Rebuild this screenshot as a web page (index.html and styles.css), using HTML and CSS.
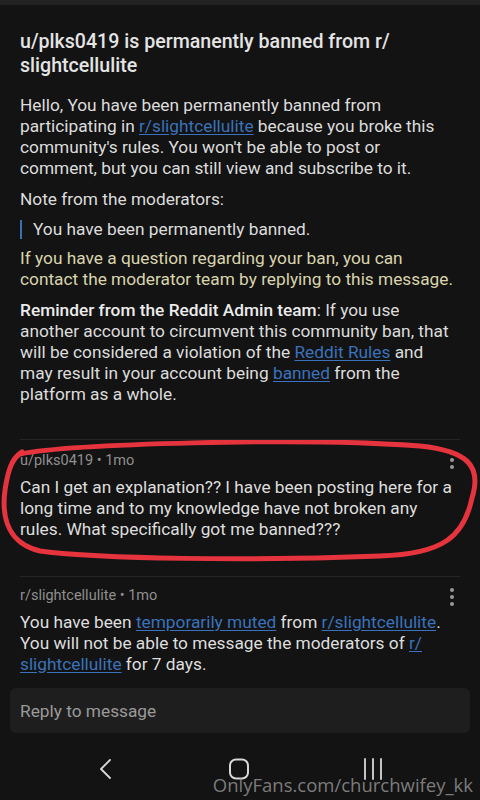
FILE: index.html
```html
<!DOCTYPE html>
<html>
<head>
<meta charset="utf-8">
<link rel="stylesheet" href="styles.css">
</head>
<body>
<div class="screen">
  <div class="topband"></div>
  <main class="content">
    <h1 class="title">u/plks0419 is permanently banned from r/ slightcellulite</h1>
    <p class="para">Hello, You have been permanently banned from participating in <a class="link">r/slightcellulite</a> because you broke this community's rules. You won't be able to post or comment, but you can still view and subscribe to it.</p>
    <p class="para">Note from the moderators:</p>
    <blockquote class="quote">You have been permanently banned.</blockquote>
    <p class="para note">If you have a question regarding your ban, you can contact the moderator team by replying to this message.</p>
    <p class="para"><strong class="strong">Reminder from the Reddit Admin team</strong>: If you use another account to circumvent this community ban, that will be considered a violation of the <a class="link">Reddit Rules</a> and may result in your account being <a class="link">banned</a> from the platform as a whole.</p>

    <section class="message circled">
      <div class="meta">u/plks0419 • 1mo</div>
      <p class="body">Can I get an explanation?? I have been posting here for a long time and to my knowledge have not broken any rules. What specifically got me banned???</p>
      <span class="dots"><i></i><i></i><i></i></span>
      <svg class="scribble" viewBox="0 0 480 130" width="480" height="130">
        <path d="M 20 14 C 70 4, 300 -3, 420 6 C 468 11, 482 26, 472 58 C 464 96, 444 114, 380 116 C 250 121, 100 119, 40 111 C 10 104, 1 80, 5 50 C 8 30, 12 18, 22 12" fill="none" stroke="#e5343d" stroke-width="5" stroke-linecap="round"/>
      </svg>
    </section>

    <section class="message second">
      <div class="meta">r/slightcellulite • 1mo</div>
      <p class="body">You have been <a class="link">temporarily muted</a> from <a class="link">r/slightcellulite</a>. You will not be able to message the moderators of <a class="link">r/ slightcellulite</a> for 7 days.</p>
      <span class="dots"><i></i><i></i><i></i></span>
    </section>
  </main>

  <div class="reply">Reply to message</div>

  <nav class="navbar">
    <svg class="nav-icon" width="20" height="24" viewBox="0 0 20 24"><path d="M 13 3 L 4 12 L 13 21" fill="none" stroke="#d8d8d8" stroke-width="1.8" stroke-linecap="round" stroke-linejoin="round"/></svg>
    <svg class="nav-icon" width="24" height="24" viewBox="0 0 24 24"><rect x="3" y="2.5" width="18" height="19" rx="6" fill="none" stroke="#d8d8d8" stroke-width="2"/></svg>
    <svg class="nav-icon" width="24" height="24" viewBox="0 0 24 24"><path d="M 4 2 V 22 M 12 2 V 22 M 20 2 V 22" stroke="#d8d8d8" stroke-width="1.8" stroke-linecap="round"/></svg>
    <span class="watermark">OnlyFans.com/churchwifey_kk</span>
  </nav>
</div>
</body>
</html>
```

FILE: styles.css
```css
html, body {
  margin: 0;
  padding: 0;
  background: #131313;
}
.screen {
  width: 480px;
  height: 800px;
  overflow: hidden;
  display: flex;
  flex-direction: column;
  background: #131313;
  font-family: Roboto, "Liberation Sans", sans-serif;
  color: #dedede;
}
.topband {
  height: 5px;
  background: #222222;
  flex: none;
}
.content {
  padding: 25px 20px 0 20px;
  flex: 1;
}
.title {
  margin: 0 0 17px 0;
  font-size: 19.6px;
  line-height: 24px;
  font-weight: 500;
  color: #e4e4e4;
  padding-right: 40px;
}
.para {
  margin: 0 0 10px 0;
  font-size: 17.3px;
  line-height: 21px;
  color: #dcdcdc;
}
.note {
  color: #d9d4ac;
}
.strong {
  font-weight: 500;
  color: #ececec;
}
.link {
  color: #3a72bb;
  text-decoration: underline;
  text-underline-offset: 2px;
}
.quote {
  margin: 0 0 9px 0;
  padding-left: 11px;
  border-left: 2px solid #3b6fb0;
  font-size: 17.3px;
  line-height: 19px;
  color: #dcdcdc;
}
.message {
  position: relative;
  margin-top: 34px;
  border-top: 1px solid #262626;
  padding-top: 12px;
}
.message.second {
  margin-top: 36px;
  padding-top: 10px;
}
.meta {
  font-size: 14.5px;
  line-height: 18px;
  color: #8f8f8f;
}
.body {
  margin: 7px 0 0 0;
  font-size: 17.3px;
  line-height: 21px;
  color: #dedede;
}
.dots {
  position: absolute;
  right: 6px;
  top: 11px;
  display: flex;
  flex-direction: column;
  gap: 3px;
}
.dots i {
  display: block;
  width: 4px;
  height: 4px;
  border-radius: 50%;
  background: #9a9a9a;
}
.scribble {
  position: absolute;
  left: -20px;
  top: 0;
  pointer-events: none;
}
.reply {
  flex: none;
  margin: 0 10px;
  height: 45px;
  box-sizing: border-box;
  padding: 0 10px;
  display: flex;
  align-items: center;
  background: #1e1e1e;
  border-radius: 6px;
  font-size: 17.3px;
  color: #9a9a9a;
  margin-bottom: 24px;
}
.navbar {
  position: relative;
  flex: none;
  height: 43px;
  display: flex;
  justify-content: space-between;
  align-items: flex-start;
  padding: 0 95px 0 97px;
}
.nav-icon {
  display: block;
}
.watermark {
  position: absolute;
  right: 7px;
  bottom: 3px;
  font-family: "Open Sans", "DejaVu Sans", sans-serif;
  font-size: 18.5px;
  color: rgba(160, 160, 160, 0.75);
  white-space: nowrap;
}
```
